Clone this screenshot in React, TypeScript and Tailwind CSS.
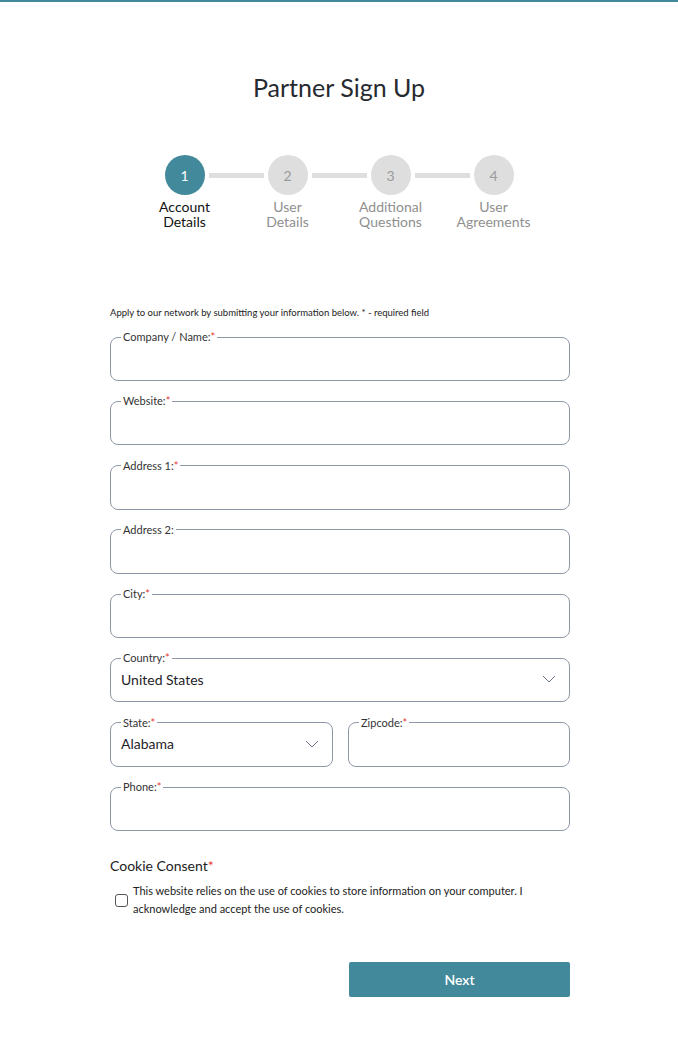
import type { ReactNode } from "react";

const steps = [
  { n: 1, label: ["Account", "Details"], active: true },
  { n: 2, label: ["User", "Details"], active: false },
  { n: 3, label: ["Additional", "Questions"], active: false },
  { n: 4, label: ["User", "Agreements"], active: false },
];

function Chevron() {
  return (
    <svg width="14" height="8" viewBox="0 0 14 8" fill="none" className="shrink-0">
      <polyline points="1,1 7,7 13,1" stroke="#6b7689" strokeWidth="1" strokeLinejoin="round" />
    </svg>
  );
}

function Req() {
  return <span className="text-[#e53935]">*</span>;
}

function Field({
  label,
  required = true,
  children,
  className = "",
}: {
  label: string;
  required?: boolean;
  children?: ReactNode;
  className?: string;
}) {
  return (
    <fieldset className={`border border-[#8e97a8] rounded-[8px] px-[10px] pb-[8px] m-0 ${className}`}>
      <legend className="px-[2px] text-[11px] leading-[14px] text-[#333]">
        {label}
        {required && <Req />}
      </legend>
      <div className="h-[28px] flex items-center">{children}</div>
    </fieldset>
  );
}

function SelectValue({ value }: { value: string }) {
  return (
    <div className="flex w-full items-center justify-between pr-[3px]">
      <span className="text-[14px] text-[#1f2328]">{value}</span>
      <Chevron />
    </div>
  );
}

export default function App() {
  return (
    <div className="min-h-[1044px] bg-white border-t-2 border-[#428a9b] font-['Lato','Noto_Sans',sans-serif] text-[#212529]">
      <h1 className="pt-[69px] text-center text-[25px] leading-[32px] font-normal text-[#262a30]">
        Partner Sign Up
      </h1>

      {/* stepper */}
      <div className="mt-[52px] flex flex-col items-center">
        <div className="flex items-center">
          {steps.map((s, i) => (
            <div key={s.n} className="flex items-center">
              <div
                className={`w-[40px] h-[40px] rounded-full flex items-center justify-center text-[14px] ${
                  s.active ? "bg-[#428a9b] text-white" : "bg-[#dedede] text-[#9a9a9a]"
                }`}
              >
                {s.n}
              </div>
              {i < steps.length - 1 && <div className="mx-[4px] w-[55px] h-[5px] bg-[#dedede]" />}
            </div>
          ))}
        </div>
        <div className="mt-[4px] flex">
          {steps.map((s) => (
            <div
              key={s.n}
              className={`w-[103px] text-center text-[14px] leading-[15px] ${
                s.active ? "text-[#111]" : "text-[#8f8f8f]"
              }`}
            >
              {s.label[0]}
              <br />
              {s.label[1]}
            </div>
          ))}
        </div>
      </div>

      {/* form */}
      <div className="ml-[110px] mt-[77px] w-[460px]">
        <p className="text-[9.5px] leading-[14px] text-[#222]">
          Apply to our network by submitting your information below. * - required field
        </p>
        <div className="mt-[10px] flex flex-col gap-[13.3px]">
          <Field label="Company / Name:" />
          <Field label="Website:" />
          <Field label="Address 1:" />
          <Field label="Address 2:" required={false} />
          <Field label="City:" />
          <Field label="Country:">
            <SelectValue value="United States" />
          </Field>
          <div className="flex gap-[15px]">
            <Field label="State:" className="w-[223px]">
              <SelectValue value="Alabama" />
            </Field>
            <Field label="Zipcode:" className="flex-1" />
          </div>
          <Field label="Phone:" />
        </div>

        <div className="mt-[25px] text-[14px] leading-[20px] text-[#222]">
          Cookie Consent
          <Req />
        </div>
        <label className="mt-[6px] flex items-center gap-[5px]">
          <span className="ml-[5px] w-[13px] h-[13px] shrink-0 rounded-[3px] border border-[#555] bg-white" />
          <span className="text-[11px] leading-[18px] text-[#222]">
            This website relies on the use of cookies to store information on your computer. I acknowledge and
            accept the use of cookies.
          </span>
        </label>

        <div className="mt-[44px] flex justify-end">
          <button className="w-[221px] h-[35px] rounded-[2px] bg-[#428a9b] text-white text-[14px] font-semibold">
            Next
          </button>
        </div>
      </div>
    </div>
  );
}
